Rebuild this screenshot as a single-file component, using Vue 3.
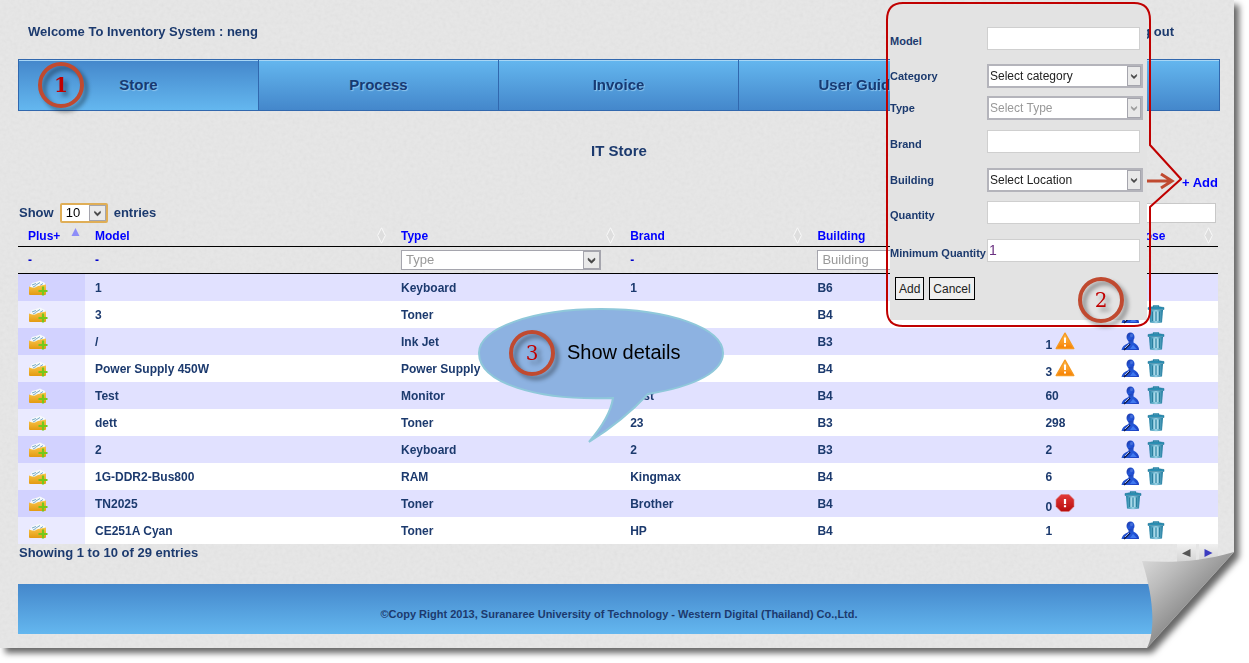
<script setup>
import { ref } from 'vue'

const menu = ['Store', 'Process', 'Invoice', 'User Guide', '']
const pageSize = ref('10')

const rows = [
  { model: '1', type: 'Keyboard', brand: '1', building: 'B6', quantity: '' },
  { model: '3', type: 'Toner', brand: '', building: 'B4', quantity: '', user: true, bin: true },
  { model: '/', type: 'Ink Jet', brand: '', building: 'B3', quantity: '1', alert: 'low', user: true, bin: true },
  { model: 'Power Supply 450W', type: 'Power Supply', brand: '', building: 'B4', quantity: '3', alert: 'low', user: true, bin: true },
  { model: 'Test', type: 'Monitor', brand: 'Test', building: 'B4', quantity: '60', user: true, bin: true },
  { model: 'dett', type: 'Toner', brand: '23', building: 'B3', quantity: '298', user: true, bin: true },
  { model: '2', type: 'Keyboard', brand: '2', building: 'B3', quantity: '2', user: true, bin: true },
  { model: '1G-DDR2-Bus800', type: 'RAM', brand: 'Kingmax', building: 'B4', quantity: '6', user: true, bin: true },
  { model: 'TN2025', type: 'Toner', brand: 'Brother', building: 'B4', quantity: '0', alert: 'out', bin: true },
  { model: 'CE251A Cyan', type: 'Toner', brand: 'HP', building: 'B4', quantity: '1', user: true, bin: true }
]

const fields = ref([
  { id: 'model', label: 'Model', value: '' },
  { id: 'category', label: 'Category', options: ['Select category'] },
  { id: 'type', label: 'Type', options: ['Select Type'], disabled: true },
  { id: 'brand', label: 'Brand', value: '' },
  { id: 'building', label: 'Building', options: ['Select Location'] },
  { id: 'quantity', label: 'Quantity', value: '' },
  { id: 'minimum', label: 'Minimum Quantity', value: '1' }
])
</script>

<template>
  <div class="page">
    <svg class="defs" aria-hidden="true">
      <defs>
        <linearGradient id="gFolder" x1="0" y1="0" x2="0" y2="1"><stop offset="0" stop-color="#f9c64a" /><stop offset="1" stop-color="#e39a12" /></linearGradient>
        <linearGradient id="gUser" x1="0" y1="0" x2="1" y2="1"><stop offset="0" stop-color="#1a2f9c" /><stop offset=".5" stop-color="#2458d8" /><stop offset="1" stop-color="#1c3fc0" /></linearGradient>
        <linearGradient id="gBin" x1="0" y1="0" x2="1" y2="0"><stop offset="0" stop-color="#1d7fa4" /><stop offset=".5" stop-color="#9ad3e6" /><stop offset="1" stop-color="#1b789c" /></linearGradient>
        <linearGradient id="gWarn" x1="0" y1="0" x2="0" y2="1"><stop offset="0" stop-color="#ffc25a" /><stop offset="1" stop-color="#f77f00" /></linearGradient>
        <linearGradient id="gStop" x1="0" y1="0" x2="0" y2="1"><stop offset="0" stop-color="#e23a3a" /><stop offset="1" stop-color="#b80c0c" /></linearGradient>
        <linearGradient id="gCurl" x1="0" y1="0" x2=".55" y2=".6"><stop offset="0" stop-color="#dedede" /><stop offset=".45" stop-color="#bcbcbc" /><stop offset="1" stop-color="#8b8b8b" /></linearGradient>
      </defs>
      <symbol id="folder" viewBox="0 0 20 16">
        <path d="M2 7 4 3 8 2 12 .500 17 3 17 9H2Z" fill="#f6f9fb" />
        <path d="M4 5 8 3.500M8 5 12 2.500M12 5.500 15 3.500M5 7 8 5.500" stroke="#6ba3bf" stroke-width=".9" />
        <path d="M1 6.500Q4 8 7 7.500L10 6 18 4.500 18 14Q18 15 17 15H2Q1 15 1 14Z" fill="url(#gFolder)" />
        <path d="M15 6.500V15.500M10.500 11H19.500" stroke="#74c81c" stroke-width="2.200" />
      </symbol>
      <symbol id="user" viewBox="0 0 18 19">
        <ellipse cx="9.500" cy="5" rx="4" ry="4.600" fill="url(#gUser)" />
        <path d="M7.500 8H12.500V10.500Q18 13 18 18H.500Q1 13.500 7.500 11Z" fill="url(#gUser)" />
        <path d="M3 18 9 12" stroke="#10194a" stroke-width="1.600" />
        <path d="M4 16 8 12" stroke="#cfdcff" stroke-width=".8" />
        <ellipse cx="10.500" cy="3.500" rx="1.500" ry="1.800" fill="#5a7fe0" opacity=".6" />
        <path d="M12 13 16 17H9Z" fill="#4f8bff" opacity=".7" />
      </symbol>
      <symbol id="bin" viewBox="0 0 18 19">
        <path d="M6.500 2V.800H11.500V2" fill="none" stroke="#2a87a8" stroke-width="1.200" />
        <path d="M1 2.500Q9 .500 17 2.500V4.500H1Z" fill="#2b8fb3" stroke="#1b6f91" stroke-width=".5" />
        <path d="M2 5H16L15 17.500Q9 19 3 17.500Z" fill="url(#gBin)" />
        <path d="M5.500 6.500V16M9 6.500V16M12.500 6.500V16" stroke="#2a7f9e" stroke-width="1" />
        <path d="M7.200 6.500V16M10.800 6.500V16" stroke="#c4e8f3" stroke-width=".9" />
      </symbol>
      <symbol id="low" viewBox="0 0 20 18">
        <path d="M10 1.200 18.800 16.500H1.200Z" fill="url(#gWarn)" stroke="#f59a23" stroke-width="1.400" stroke-linejoin="round" />
        <path d="M10 5.500V11M10 12.500V14.500" stroke="#fff" stroke-width="2" />
      </symbol>
      <symbol id="out" viewBox="0 0 20 18">
        <path d="M6 .500H14L19 5.500V12.500L14 17.500H6L1 12.500V5.500Z" fill="url(#gStop)" stroke="#d98080" stroke-width=".6" />
        <path d="M10 5V10M10 11.200V13.200" stroke="#fff" stroke-width="2.200" />
      </symbol>
      <symbol id="sort" viewBox="0 0 9 17">
        <path d="M4.500 .800 8.300 8.500 4.500 16.200 .700 8.500Z" fill="#dedede" stroke="#fbfbfb" stroke-width=".9" />
      </symbol>
      <symbol id="caret" viewBox="0 0 16 17">
        <path d="M4.500 6.500 8 9.500 11.500 6.500V8.500L8 12 4.500 8.500Z" fill="currentColor" stroke="currentColor" stroke-width=".8" />
      </symbol>
    </svg>

    <div class="lift">
      <div class="sheet">
        <svg class="grain" aria-hidden="true">
          <filter id="paper"><feTurbulence type="fractalNoise" baseFrequency=".28" numOctaves="2" seed="4" /><feColorMatrix type="saturate" values="0" /><feComponentTransfer><feFuncA type="linear" slope="0" intercept="1" /></feComponentTransfer></filter>
          <rect width="100%" height="100%" filter="url(#paper)" />
        </svg>

        <header class="top">
          <span>Welcome To Inventory System : neng</span>
          <a href="#">Log out</a>
        </header>

        <nav class="menu">
          <a v-for="(item, i) in menu" :key="i" href="#" :class="{ on: i === 0 }">
            {{ item }}<span v-if="i === 0" class="badge first">1</span>
          </a>
        </nav>

        <main>
          <h1>IT Store</h1>
          <div class="actions"><a href="#">+ Add</a></div>
          <div class="tools">
            <label class="size" for="size">Show
              <span class="pick glow"><select id="size" v-model="pageSize"><option>10</option><option>25</option></select><svg><use href="#caret" /></svg></span>
              entries</label>
            <input class="search" type="text" aria-label="Search">
          </div>

          <div class="grid">
            <table>
              <colgroup><col class="c1"><col class="c2"><col class="c3"><col class="c4"><col class="c5"><col class="c6"><col></colgroup>
              <thead>
                <tr class="heads">
                  <th>Plus+<svg class="up" viewBox="0 0 8 8"><path d="M4 0 8 8H0Z" fill="#8d8df8" /></svg></th>
                  <th>Model<svg class="sort"><use href="#sort" /></svg></th>
                  <th>Type<svg class="sort"><use href="#sort" /></svg></th>
                  <th>Brand<svg class="sort"><use href="#sort" /></svg></th>
                  <th>Building</th>
                  <th></th>
                  <th>Choose<svg class="sort"><use href="#sort" /></svg></th>
                </tr>
                <tr class="filters">
                  <td>-</td>
                  <td>-</td>
                  <td><span class="pick wide"><select aria-label="Filter by type"><option>Type</option></select><svg><use href="#caret" /></svg></span></td>
                  <td>-</td>
                  <td><span class="pick wide"><select aria-label="Filter by building"><option>Building</option></select><svg><use href="#caret" /></svg></span></td>
                  <td></td>
                  <td></td>
                </tr>
              </thead>
              <tbody>
                <tr v-for="(row, i) in rows" :key="i">
                  <td><button class="icon" aria-label="Add stock"><svg class="i-folder"><use href="#folder" /></svg></button></td>
                  <td>{{ row.model }}</td>
                  <td>{{ row.type }}</td>
                  <td>{{ row.brand }}</td>
                  <td>{{ row.building }}</td>
                  <td><span class="qty" :class="{ flagged: row.alert }">{{ row.quantity }}<svg v-if="row.alert" class="i-alert"><use :href="'#' + row.alert" /></svg></span></td>
                  <td>
                    <span class="ops" :class="{ solo: !row.user }">
                      <button v-if="row.user" class="icon" aria-label="Assign"><svg class="i-op"><use href="#user" /></svg></button>
                      <button v-if="row.bin" class="icon" aria-label="Delete"><svg class="i-op"><use href="#bin" /></svg></button>
                    </span>
                  </td>
                </tr>
              </tbody>
            </table>

            <div class="bubble">
              <svg viewBox="0 0 248 138" aria-hidden="true">
                <path d="M136 91C60 94 2 76 2 46 2 21 56 2 124 2S246 21 246 46C246 64 220 79 171 87 156 103 136 120 112 135 124 121 134 105 136 91Z" fill="#8db2e1" stroke="#8fc8da" stroke-width="2" />
              </svg>
              <span class="badge third">3</span>
              <span class="say">Show details</span>
            </div>
          </div>

          <div class="info">
            <span>Showing 1 to 10 of 29 entries</span>
            <span class="pager">
              <button aria-label="Previous"><svg viewBox="0 0 9 8"><path d="M8.500 0V8L0 4.500Z" fill="#555" /></svg></button>
              <button aria-label="Next"><svg viewBox="0 0 9 8"><path d="M.500 0V8L8.500 4Z" fill="#3c3cc0" /></svg></button>
            </span>
          </div>
        </main>

        <footer>©Copy Right 2013, Suranaree University of Technology - Western Digital (Thailand) Co.,Ltd.</footer>

        <svg class="curl" viewBox="0 0 94 98" aria-hidden="true">
          <path d="M2 11C30 13 60 12 94 2V98H7C14 85 16 55 2 11Z" fill="url(#gCurl)" />
        </svg>

        <form class="popup" @submit.prevent>
          <div v-for="f in fields" :key="f.id" class="field" :class="[f.id, { text: !f.options }]">
            <label :for="'f-' + f.id">{{ f.label }}</label>
            <span v-if="f.options" class="pick box" :class="{ off: f.disabled }">
              <select :id="'f-' + f.id" :disabled="f.disabled"><option v-for="o in f.options" :key="o">{{ o }}</option></select>
              <svg><use href="#caret" /></svg>
            </span>
            <input v-else :id="'f-' + f.id" v-model="f.value" type="text">
          </div>
          <div class="buttons"><button type="submit">Add</button><button type="button">Cancel</button></div>
          <svg class="outline" viewBox="0 0 296 330" aria-hidden="true">
            <path d="M17 3H248Q264 3 264 20V145L295 179 264 207V310Q264 326 248 326H17Q1 326 1 310V20Q1 3 17 3Z" fill="none" stroke="#c00000" stroke-width="2" />
            <path d="M261 181H284M275 174 286 181 275 188" fill="none" stroke="#c04a30" stroke-width="3" />
          </svg>
          <span class="badge second">2</span>
        </form>
      </div>
    </div>
  </div>
</template>

<style>
body { background: #fff; }
</style>

<style scoped>
.page { padding: 0 15px 15px 0; font: bold 12px/16px "Liberation Sans", Arial, sans-serif; color: #1c3a6e; overflow: hidden; }
.page * { box-sizing: border-box; }
.defs { position: absolute; width: 0; height: 0; }
.lift { filter: drop-shadow(5px 5px 3px #666); }
.sheet { position: relative; background: #e8e8e8; padding: 0 14px 14px 18px; clip-path: polygon(0 0, 100% 0, 100% calc(100% - 96px), calc(100% - 87px) 100%, 0 100%); }
.grain { position: absolute; inset: 0; width: 100%; height: 100%; opacity: .06; }
header, nav, main, footer { position: relative; }
a { color: inherit; text-decoration: none; }
button, input, select { font: inherit; color: inherit; }

.top { display: flex; justify-content: space-between; padding: 22px 46px 17px 10px; font-size: 13px; line-height: 20px; }

.menu { display: grid; grid-template-columns: repeat(5, 1fr); height: 52px; border: 1px solid #3168ae; }
.menu a { position: relative; display: flex; align-items: center; justify-content: center; font-size: 15px; color: #173a73; text-shadow: 1px 1px 1px #8ec6ee; background: linear-gradient(#64b7ef, #4487cb); box-shadow: inset 0 1px #a8d6f5; border-right: 1px solid #3168ae; }
.menu a:last-child { border: 0; }
.menu a.on { background: linear-gradient(#4487cb, #64b7ef); }

.badge { position: absolute; display: flex; align-items: center; justify-content: center; width: 46px; height: 46px; border: 4px solid #c04a30; border-radius: 50%; font: 20px/24px "DejaVu Serif", serif; color: #c00000; text-shadow: none; filter: drop-shadow(4px 4px 2px rgba(0, 0, 0, .4)); }
.first { left: 19px; top: 2px; font-weight: bold; }
.second { left: 192px; top: 277px; }
.third { left: 32px; top: 23px; }

h1 { margin: 30px 0 0; font-size: 15px; line-height: 20px; text-align: center; }
.actions { margin: 13px 2px 0 0; text-align: right; font-size: 13px; line-height: 18px; color: #00f; }
.tools { display: flex; justify-content: space-between; align-items: center; height: 22px; margin: 10px 4px 2px 1px; font-size: 13px; }
.size { display: flex; align-items: center; gap: 6px; }
.search { width: 160px; height: 20px; border: 1px solid #c8c8c8; background: #fff; }

.pick { position: relative; display: inline-flex; vertical-align: middle; height: 20px; border: 1px solid #a5a5ad; background: #fff; font-size: 13px; font-weight: normal; color: #999; }
.pick select { appearance: none; flex: 1; min-width: 0; border: 0; margin: 0; padding: 0 18px 0 4px; background: transparent; line-height: 16px; outline: 0; }
.pick svg { position: absolute; right: 0; top: 0; width: 17px; height: 100%; border: 1px solid #a5a5ad; background: #e9e9e9; color: #444; pointer-events: none; }
.glow { width: 48px; border: 2px solid #dfae57; border-radius: 2px; color: #000; }
.wide { width: 200px; }

.grid { position: relative; margin-right: 2px; }
table { width: 100%; table-layout: fixed; border-spacing: 0; }
.c1 { width: 67px; }
.c2 { width: 25.5%; }
.c3 { width: 19.1%; }
.c4 { width: 15.6%; }
.c5 { width: 19%; }
.c6 { width: 76px; }
th, td { padding: 0 10px; text-align: left; height: 27px; }
.heads th { position: relative; height: 21px; color: #00f; border-bottom: 1px solid #000; }
.filters td { color: #00c; border-bottom: 1px solid #000; }
.filters td .pick { display: flex; }
.sort { position: absolute; right: 5px; top: 1px; width: 9px; height: 17px; }
.up { position: absolute; right: 5px; top: 2px; width: 9px; height: 8px; }
tbody tr { background: #fff; }
tbody tr:nth-child(odd) { background: #e1e1ff; }
tbody td:first-child { background: #eaeaff; }
tbody tr:nth-child(odd) td:first-child { background: #d2d2ff; }
tbody td { white-space: nowrap; }
.icon { display: flex; border: 0; padding: 0; background: none; cursor: pointer; }
.i-folder { width: 20px; height: 16px; }
.qty { display: flex; align-items: flex-end; gap: 3px; height: 16px; }
.flagged { height: 24px; padding-bottom: 1px; }
.i-alert { width: 20px; height: 18px; margin-bottom: 3px; }
.ops { display: flex; gap: 8px; }
.solo { padding: 0 0 6px 3px; }
.i-op { width: 18px; height: 19px; }

.bubble { position: absolute; left: 459px; top: 81px; width: 248px; height: 138px; }
.bubble > svg { display: block; width: 100%; height: 100%; }
.say { position: absolute; left: 90px; top: 33px; font-size: 20px; line-height: 24px; font-weight: normal; color: #000; white-space: nowrap; }

.info { display: flex; justify-content: space-between; height: 40px; padding-left: 1px; margin-right: 2px; font-size: 13px; line-height: 17px; }
.pager { display: flex; gap: 3px; }
.pager button { width: 19px; height: 18px; padding: 0 0 2px; border: 0; background: linear-gradient(#f0f0f0, #d4d4d4); }
.pager svg { width: 9px; height: 8px; }

footer { height: 50px; padding-top: 22px; text-align: center; font-size: 11px; line-height: 16px; background: linear-gradient(#4487cb, #64b7ef); }
.curl { position: absolute; right: 0; bottom: 0; width: 94px; height: 98px; }

.popup { position: absolute; right: 83px; top: 0; width: 265px; height: 330px; padding-top: 19px; }
.popup::before { content: ""; position: absolute; left: 4px; top: 5px; width: 257px; height: 315px; background: #e3e3e3; }
.field { position: relative; display: grid; grid-template-columns: 97px 155px; align-items: center; height: 38px; padding-left: 4px; }
.field label { font-size: 11px; white-space: nowrap; }
.text label { padding-top: 6px; }
.field.type { height: 26px; }
.field.brand { height: 40px; }
.field.quantity { height: 26px; }
.field.minimum { height: 50px; }
.field input { width: 153px; height: 23px; border: 1px solid #cfcfcf; padding: 0 1px; background: #fff; font-size: 14px; font-weight: normal; color: #6a3080; }
.box { width: 156px; height: 24px; border: 2px solid #b4b4bb; font-size: 12px; color: #222; }
.box select { padding-left: 1px; }
.box svg { width: 14px; }
.off, .off svg { color: #999; }
.off select { opacity: 1; }
.buttons { position: relative; display: flex; gap: 5px; padding: 2px 0 0 9px; }
.buttons button { height: 23px; padding: 0 3px; border: 1px solid #000; background: #efefef; font-weight: normal; color: #222; }
.outline { position: absolute; left: 0; top: 0; width: 296px; height: 330px; }
</style>
